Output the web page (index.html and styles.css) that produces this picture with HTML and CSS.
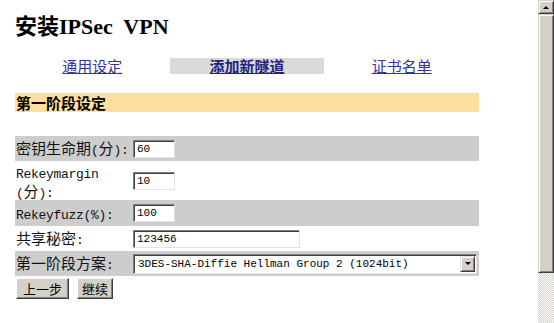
FILE: index.html
```html
<!DOCTYPE html>
<html lang="zh-CN">
<head>
<meta charset="utf-8">
<title>安装IPSec VPN</title>
<link rel="stylesheet" href="styles.css">
</head>
<body>
<div class="page">
  <main class="main">
    <h1 class="title">安装IPSec&nbsp; VPN</h1>
    <nav class="tabs">
      <div class="tab"><a href="#">通用设定</a></div>
      <div class="tab tab-active"><a href="#">添加新隧道</a></div>
      <div class="tab"><a href="#">证书名单</a></div>
    </nav>
    <div class="section">第一阶段设定</div>
    <div class="form">
      <div class="row shade r25">
        <div class="lab">密钥生命期<span class="m">(</span>分<span class="m">):</span></div>
        <div class="val"><input class="inp w42" type="text" value="60"></div>
      </div>
      <div class="row r39">
        <div class="lab lab2"><span class="m">Rekeymargin</span><br><span class="m">(</span>分<span class="m">):</span></div>
        <div class="val"><input class="inp w42" type="text" value="10"></div>
      </div>
      <div class="row shade r26">
        <div class="lab"><span class="m">Rekeyfuzz(%):</span></div>
        <div class="val"><input class="inp w42" type="text" value="100"></div>
      </div>
      <div class="row r25">
        <div class="lab">共享秘密<span class="m">:</span></div>
        <div class="val"><input class="inp w167" type="text" value="123456"></div>
      </div>
      <div class="row shade r25">
        <div class="lab">第一阶段方案<span class="m">:</span></div>
        <div class="val">
          <div class="sel">
            <span class="sel-text">3DES-SHA-Diffie Hellman Group 2 (1024bit)</span>
            <span class="sel-btn"><span class="tri-down"></span></span>
          </div>
        </div>
      </div>
    </div>
    <div class="btns">
      <button class="btn btn-prev" type="button">上一步</button>
      <button class="btn btn-next" type="button">继续</button>
    </div>
  </main>
  <div class="sb">
    <div class="sb-up"><span class="tri-up"></span></div>
    <div class="sb-thumb"></div>
    <div class="sb-track"></div>
  </div>
</div>
</body>
</html>
```
FILE: styles.css
```css
html, body {
  margin: 0;
  padding: 0;
  background: #fff;
}
body {
  font-family: "Noto Sans CJK SC", sans-serif;
  color: #000;
}
.page {
  display: flex;
  width: 554px;
  height: 323px;
  overflow: hidden;
}
.main {
  flex: 1;
  padding: 14px 0 0 15px;
}
.title {
  margin: 0;
  height: 26px;
  font: bold 22px/26px "Liberation Serif", "Noto Sans CJK SC", serif;
  white-space: nowrap;
}
.tabs {
  display: grid;
  grid-template-columns: repeat(3, 1fr);
  width: 464px;
  height: 16px;
  margin-top: 18px;
}
.tab {
  text-align: center;
  font-size: 15px;
  line-height: 16px;
  height: 16px;
}
.tab a {
  color: #333399;
  text-decoration: underline;
}
.tab-active {
  background: #dadada;
}
.tab-active a {
  font-weight: bold;
  color: #23237f;
}
.section {
  box-sizing: border-box;
  margin-top: 19px;
  width: 464px;
  height: 19px;
  padding-left: 1px;
  background: #ffdf9f;
  font-weight: bold;
  font-size: 15px;
  line-height: 19px;
}
.form {
  margin-top: 24px;
  width: 464px;
}
.row {
  display: grid;
  grid-template-columns: 116px 1fr;
  align-items: center;
}
.r25 { height: 25px; }
.r26 { height: 26px; }
.r39 { height: 39px; }
.shade {
  background: #cdcdcd;
}
.lab {
  padding-left: 1px;
  font-size: 15px;
  line-height: 16px;
  white-space: nowrap;
  color: #111;
}
.lab2 {
  line-height: 19px;
}
.m {
  font-family: "Liberation Mono", monospace;
  font-size: 13px;
  letter-spacing: -0.3px;
  line-height: 12px;
}
.val {
  display: flex;
  align-items: center;
  padding-left: 2px;
}
.inp {
  box-sizing: border-box;
  height: 18px;
  margin: 0;
  padding: 0 1px 0 3px;
  border: 1px solid;
  border-color: #808080 #e4e2dc #e4e2dc #808080;
  box-shadow: inset 1px 1px 0 #404040;
  background: #fff;
  color: #000;
  font: 11px "Liberation Mono", monospace;
  outline: none;
}
.w42 { width: 42px; }
.w167 { width: 167px; }
.sel {
  box-sizing: border-box;
  display: flex;
  align-items: center;
  width: 344px;
  height: 20px;
  border: 1px solid;
  border-color: #808080 #e4e2dc #e4e2dc #808080;
  box-shadow: inset 1px 1px 0 #404040;
  background: #fff;
  padding: 1px 1px 1px 4px;
}
.sel-text {
  flex: 1;
  font: 11px/16px "Liberation Mono", monospace;
  white-space: nowrap;
}
.sel-btn {
  box-sizing: border-box;
  display: flex;
  align-items: center;
  justify-content: center;
  width: 15px;
  height: 16px;
  background: #d4d0c8;
  border: 1px solid;
  border-color: #e8e6e0 #404040 #404040 #e8e6e0;
  box-shadow: inset 1px 1px 0 #fff, inset -1px -1px 0 #808080;
}
.tri-down {
  width: 0;
  height: 0;
  border-left: 3px solid transparent;
  border-right: 3px solid transparent;
  border-top: 3px solid #000;
}
.btns {
  display: flex;
  gap: 8px;
  margin-top: 2px;
  padding-left: 1px;
}
.btn {
  box-sizing: border-box;
  height: 21px;
  margin: 0;
  padding: 0;
  background: #d4d0c8;
  border: 1px solid;
  border-color: #fff #404040 #404040 #fff;
  box-shadow: inset -1px -1px 0 #808080;
  font: 13px/17px "Noto Sans CJK SC", sans-serif;
  color: #000;
}
.btn-prev { width: 53px; }
.btn-next { width: 36px; }
.sb {
  display: flex;
  flex-direction: column;
  width: 16px;
  height: 323px;
}
.sb-up, .sb-thumb {
  box-sizing: border-box;
  background: #d4d0c8;
  border: 1px solid;
  border-color: #d4d0c8 #404040 #404040 #d4d0c8;
  box-shadow: inset 1px 1px 0 #fff, inset -1px -1px 0 #808080;
}
.sb-up {
  height: 14px;
  display: flex;
  align-items: center;
  justify-content: center;
}
.tri-up {
  width: 0;
  height: 0;
  border-left: 3px solid transparent;
  border-right: 3px solid transparent;
  border-bottom: 3px solid #000;
}
.sb-thumb {
  height: 259px;
}
.sb-track {
  flex: 1;
  background: repeating-conic-gradient(#fff 0 25%, #d4d0c8 0 50%) 0 0 / 2px 2px;
}
```
